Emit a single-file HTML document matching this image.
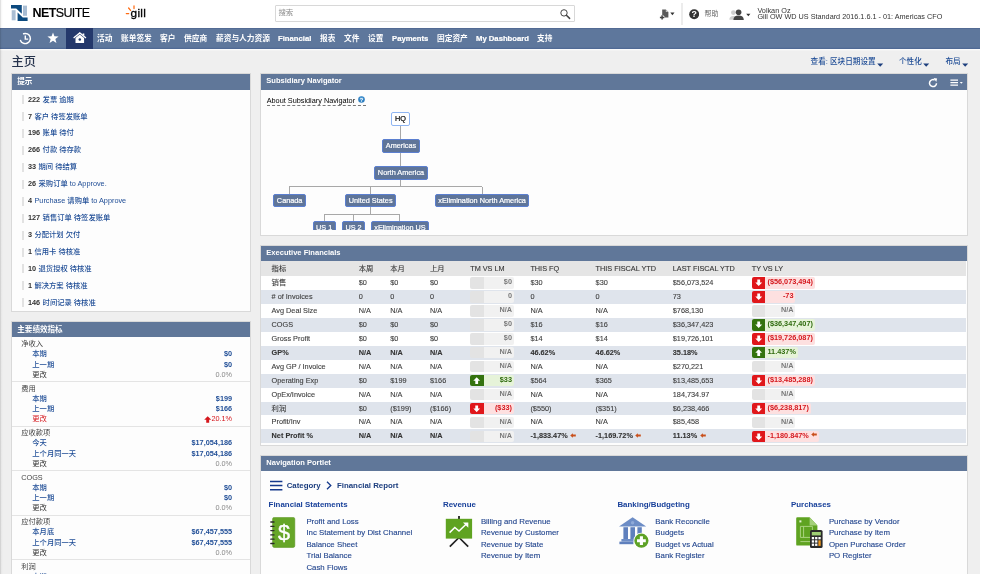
<!DOCTYPE html>
<html lang="zh-CN">
<head>
<meta charset="utf-8">
<title>主页 - NetSuite</title>
<style>
html,body{margin:0;padding:0}
body{width:981px;height:574px;overflow:hidden;background:#fff;position:relative;
 font-family:"Liberation Sans","Noto Sans CJK SC",sans-serif;font-size:7.6px;color:#333;line-height:1}
*{box-sizing:border-box}
a{text-decoration:none;color:#1f4d96}
#page{position:absolute;left:0;top:0;width:981px;height:574px;overflow:hidden;will-change:transform;background:linear-gradient(#efefef,#efefef) 0 0/980px 574px no-repeat}
#edge{position:absolute;left:0;top:0;width:3px;height:574px;background:linear-gradient(to right,rgba(0,0,0,.16),rgba(0,0,0,.03) 45%,rgba(0,0,0,0));z-index:5}
.abs{position:absolute;white-space:nowrap}
#hdr{position:absolute;left:0;top:0;width:981px;height:28.4px;background:#fff}
#nav{position:absolute;left:0;top:28.4px;width:980px;height:20.5px;background:#5e779c;box-shadow:inset 0 1px 0 #536b94,inset 0 -1.2px 0 #506a95,0 1.3px 0 #fbfbfb}
#nav .it{position:absolute;top:0.3px;height:20.5px;line-height:20.5px;color:#fff;font-weight:bold;font-size:7.7px;white-space:nowrap}
#nav .lt{-webkit-text-stroke:0.2px #fff}
#home{position:absolute;left:66px;top:0;width:27px;height:20.5px;background:#24386b}
.panel{position:absolute;background:#fdfdfd;overflow:hidden;box-shadow:0 0 0 1px #d9d9d9}
.ph{position:absolute;left:0;top:0;right:0;height:15.4px;background:#607799;color:#fff;font-weight:bold;font-size:7.55px;line-height:15.4px;padding-left:5.3px;white-space:nowrap}
.ph.phl{line-height:14px}
.rm{position:absolute;left:10px;height:10px;line-height:10px;font-size:7.3px;white-space:nowrap;padding-left:6px;color:#333}
.rm i{position:absolute;left:0;top:0.6px;width:1.6px;height:9px;background:#e2e2e2}
.rm b{color:#333;margin-right:0.4px}
.rm a{font-weight:500}
.kh{position:absolute;left:9.2px;height:10px;line-height:10px;font-size:7.3px;color:#444;white-space:nowrap}
.kr{position:absolute;left:20.3px;width:199.8px;height:10px;line-height:10px;font-size:7.3px;white-space:nowrap}
.kr span{position:absolute;right:0;top:0}
.kb{font-weight:bold;color:#1f4d96}
.kb a{font-weight:500}
.kg em{font-style:normal;color:#333}
.kg span{color:#888}
.kred{color:#d5171d}
.kred em{font-style:normal}
.ks{position:absolute;left:0;right:0;height:1px;background:#e4e4e4}
.tc{font-size:7.6px;line-height:10px;color:#1f4d96;font-weight:500}
.nd{position:absolute;background:#5f7599;border:1px solid #5b7fd0;border-radius:2px;color:#fff;font-size:7.3px;text-align:center;white-space:nowrap;line-height:11.6px;-webkit-text-stroke:0.2px #fff}
.nd.hq{background:#fff;border-color:#8fb5f2;color:#000;-webkit-text-stroke:0.2px #000}
.ln{position:absolute;background:#a8a8a8}
.th,.tr{position:absolute;left:0;right:1.2px;white-space:nowrap;font-size:7.3px;color:#3c3c3c;-webkit-text-stroke:0.1px #3c3c3c}
.th{background:#e5e5e5;color:#333}
.th span{position:absolute;top:0;line-height:15.4px}
.tr{height:13.95px;background:#fff}
.tr.alt{background:#dfe4ec}
.tr.bd{font-weight:bold;color:#333}
.tr>span{position:absolute;top:0;line-height:14.6px}
.tr>span.ic{top:1.25px;line-height:0}
.la{vertical-align:0.3px;margin-left:0.5px}
.ind{-webkit-text-stroke:0;display:inline-flex;height:11.5px;min-width:43.8px;border-radius:2px;overflow:hidden;font-weight:bold;font-size:7.3px;vertical-align:top}
.ind i{display:block;width:13.4px;height:11.5px;flex:none;text-align:center;line-height:0;padding-top:2.1px}
.ind u{display:block;flex:1;text-decoration:none;text-align:right;padding:0 2px 0 2.4px;line-height:9.8px;height:11.5px}
.ind.n i{background:#e3e3e3}.ind.n u{background:#f1f1f1;color:#7a7a7a}
.ind.r i{background:#e0171b}.ind.r u{background:#fde0e0;color:#d5171d}
.ind.g i{background:#34730f}.ind.g u{background:#e6f3d9;color:#2f6b0e}
.nb{font-size:7.85px;font-weight:bold;color:#1b3d7e;line-height:10px}
.nh{font-size:7.9px;font-weight:bold;color:#18409a;line-height:10px}
.nl{font-size:7.85px;color:#24478f;line-height:10px;-webkit-text-stroke:0.12px #24478f}
</style>
</head>
<body>
<div id="page">
<div id="edge"></div>
<div id="hdr">
 <svg class="abs" style="left:11.4px;top:4.8px" width="16.6" height="16" viewBox="0 0 16.6 16">
  <rect x="0.7" y="5.2" width="3.9" height="10.1" fill="#a9bdd3"/>
  <rect x="12" y="0.6" width="4" height="10.2" fill="#a9bdd3"/>
  <polygon points="0,0 10.8,0 10.8,8.8 5.2,3.6 0,3.6" fill="#0c4a7f"/>
  <polygon points="6.6,16 16.6,16 16.6,12.4 11.8,12.4 6.6,7.4" fill="#0c4a7f"/>
 </svg>
 <div class="abs" id="nstxt" style="left:32.6px;top:5.8px;font-size:12.5px;line-height:15px;color:#000;letter-spacing:-0.62px"><b>NET</b><span style="-webkit-text-stroke:0.15px #000">SUITE</span></div>
 <svg class="abs" style="left:125px;top:4px" width="12" height="12" viewBox="0 0 12 12">
  <g stroke="#ff6a10" stroke-width="1.25" stroke-linecap="round" fill="none">
   <line x1="9" y1="1.9" x2="9" y2="4.6"/><line x1="3.6" y1="4" x2="5.6" y2="6.3"/><line x1="1.3" y1="9.5" x2="3.7" y2="9.5"/>
  </g>
 </svg>
 <div class="abs" id="gill" style="left:130.6px;top:5.6px;font-size:11.8px;line-height:14px;color:#000;letter-spacing:0.25px;-webkit-text-stroke:0.3px #000">gill</div>
 <div class="abs" id="srch" style="left:275px;top:5px;width:300px;height:16.5px;border:1px solid #d8d8d8;background:#fff;border-radius:1px">
  <span class="abs" style="left:2.4px;top:3.4px;font-size:7.4px;line-height:8px;color:#8a8a8a">搜索</span>
  <svg class="abs" style="right:2px;top:1.9px" width="13" height="12" viewBox="0 0 13 12"><circle cx="5" cy="4.9" r="3.2" fill="none" stroke="#444" stroke-width="1"/><line x1="7.4" y1="7.3" x2="10.6" y2="10.4" stroke="#444" stroke-width="1.5" stroke-linecap="round"/></svg>
 </div>
 <svg class="abs" style="left:659px;top:8.5px" width="17" height="12" viewBox="0 0 17 12">
  <path d="M3.2 0.5h3.6l2.6 2.6v5.4H5.4L3.2 6.4z" fill="#5a5a5a"/><path d="M6.8 0.5l2.6 2.6H6.8z" fill="#c4c4c4"/>
  <path d="M3.1 6.1v4.6M0.8 8.4h4.6" stroke="#fff" stroke-width="2.6" fill="none"/>
  <path d="M3.1 6.2v4.4M0.9 8.4h4.4" stroke="#444" stroke-width="1.5" fill="none"/>
  <path d="M11.3 3.4h4.2l-2.1 2.9z" fill="#333"/>
 </svg>
 <div class="abs" style="left:681.3px;top:3px;width:1.4px;height:22px;background:#ececec"></div>
 <svg class="abs" style="left:688.5px;top:9.2px" width="10.4" height="10.4" viewBox="0 0 10.4 10.4"><circle cx="5.2" cy="5.2" r="5" fill="#333"/><text x="5.2" y="8.4" text-anchor="middle" font-family="Liberation Sans, sans-serif" font-weight="bold" font-size="8.8" fill="#fff">?</text></svg>
 <div class="abs" style="left:704.6px;top:10px;font-size:7px;line-height:8px;color:#666">帮助</div>
 <svg class="abs" style="left:728.5px;top:8.6px" width="23" height="11.5" viewBox="0 0 23 11.5">
  <circle cx="4.4" cy="3.6" r="2.4" fill="#cfcfcf"/><path d="M0.3 10.8c0-2.6 1.6-3.8 4.1-3.8s4.1 1.2 4.1 3.8z" fill="#cfcfcf"/>
  <circle cx="9.6" cy="3.3" r="2.8" fill="#444"/><path d="M4.4 11c0-3 2-4.4 5.2-4.4s5.2 1.4 5.2 4.4z" fill="#444"/>
  <path d="M17.2 4.8h4.2l-2.1 2.4z" fill="#333"/>
 </svg>
 <div class="abs" id="u1" style="left:757.4px;top:6.8px;font-size:7.27px;line-height:8px;color:#333">Volkan Oz</div>
 <div class="abs" id="u2" style="left:757.4px;top:13.4px;font-size:7.27px;line-height:8px;color:#333">Gill OW WD US Standard 2016.1.6.1 - 01: Americas CFO</div>
</div>
<div id="nav">
 <div id="home"></div>
 <svg class="abs" style="left:19px;top:3.5px" width="13" height="13" viewBox="0 0 13 13">
  <path d="M4.6 1.7A5.1 5.1 0 1 1 1.5 8.4" fill="none" stroke="#fff" stroke-width="1.45" stroke-linecap="round"/>
  <path d="M6.3 3.6v3.5h2.9" fill="none" stroke="#fff" stroke-width="1.4"/>
 </svg>
 <svg class="abs" style="left:46.6px;top:3.6px" width="12" height="12" viewBox="0 0 12 12"><polygon points="6,0.4 7.45,4.3 11.6,4.45 8.35,7 9.45,11 6,8.7 2.55,11 3.65,7 0.4,4.45 4.55,4.3" fill="#fff"/></svg>
 <svg class="abs" style="left:73.2px;top:3.6px" width="13.6" height="11.6" viewBox="0 0 13.6 11.6">
  <path d="M0.6 5.9L6.8 0.9L13 5.9" fill="none" stroke="#fff" stroke-width="1.3" stroke-linejoin="miter"/>
  <path d="M9.6 1.4h1.7v2.4l-1.7-1.3z" fill="#fff"/>
  <path d="M2.5 5.9L6.8 2.6L11.1 5.9V11H2.5z" fill="#fff"/>
  <circle cx="6.8" cy="7.6" r="1.25" fill="#24386b"/>
 </svg>
 <div class="it" style="left:97px">活动</div>
 <div class="it" style="left:121px">账单签发</div>
 <div class="it" style="left:160px">客户</div>
 <div class="it" style="left:184px">供应商</div>
 <div class="it" style="left:216px">薪资与人力资源</div>
 <div class="it lt" style="left:278px">Financial</div>
 <div class="it" style="left:320px">报表</div>
 <div class="it" style="left:344px">文件</div>
 <div class="it" style="left:368px">设置</div>
 <div class="it lt" style="left:392px">Payments</div>
 <div class="it" style="left:437px">固定资产</div>
 <div class="it lt" style="left:476px">My Dashboard</div>
 <div class="it" style="left:537px">支持</div>
</div>
<div class="abs" id="ttl" style="left:11.5px;top:53.8px;font-size:12.2px;line-height:16px;color:#26334d;font-weight:500">主页</div>

<div class="abs tc" style="left:810.6px;top:56.6px">查看: 区块日期设置</div><svg class="abs" style="left:877.2px;top:63px" width="6.4" height="4" viewBox="0 0 6.4 4"><path d="M0.2 0.4h6l-3 3.3z" fill="#1d3f7d"/></svg>
<div class="abs tc" style="left:899px;top:56.6px">个性化</div><svg class="abs" style="left:923.2px;top:63px" width="6.4" height="4" viewBox="0 0 6.4 4"><path d="M0.2 0.4h6l-3 3.3z" fill="#1d3f7d"/></svg>
<div class="abs tc" style="left:945.4px;top:56.6px">布局</div><svg class="abs" style="left:962.2px;top:63px" width="6.4" height="4" viewBox="0 0 6.4 4"><path d="M0.2 0.4h6l-3 3.3z" fill="#1d3f7d"/></svg>

<div class="panel" id="p1" style="left:12px;top:74.3px;width:238px;height:236.6px">
 <div class="ph">提示</div>
 <div class="rm" style="top:20.30px"><i></i><b>222</b> <a>发票 逾期</a></div>
 <div class="rm" style="top:37.23px"><i></i><b>7</b> <a>客户 待签发账单</a></div>
 <div class="rm" style="top:54.16px"><i></i><b>196</b> <a>账单 待付</a></div>
 <div class="rm" style="top:71.09px"><i></i><b>266</b> <a>付款 待存款</a></div>
 <div class="rm" style="top:88.02px"><i></i><b>33</b> <a>期间 待结算</a></div>
 <div class="rm" style="top:104.95px"><i></i><b>26</b> <a>采购订单 to Approve.</a></div>
 <div class="rm" style="top:121.88px"><i></i><b>4</b> <a>Purchase 请购单 to Approve</a></div>
 <div class="rm" style="top:138.81px"><i></i><b>127</b> <a>销售订单 待签发账单</a></div>
 <div class="rm" style="top:155.74px"><i></i><b>3</b> <a>分配计划 欠付</a></div>
 <div class="rm" style="top:172.67px"><i></i><b>1</b> <a>信用卡 待核准</a></div>
 <div class="rm" style="top:189.60px"><i></i><b>10</b> <a>退货授权 待核准</a></div>
 <div class="rm" style="top:206.53px"><i></i><b>1</b> <a>解决方案 待核准</a></div>
 <div class="rm" style="top:223.46px"><i></i><b>146</b> <a>时间记录 待核准</a></div>
</div>
<div class="panel" id="p2" style="left:12px;top:321.8px;width:238px;height:260px">
 <div class="ph">主要绩效指标</div>
 <div class="kh" style="top:17.50px">净收入</div>
 <div class="kr kb" style="top:27.70px"><a>本期</a><span>$0</span></div>
 <div class="kr kb" style="top:37.90px"><a>上一期</a><span>$0</span></div>
 <div class="kr kg" style="top:48.10px"><em>更改</em><span>0.0%</span></div>
 <div class="ks" style="top:59.60px"></div>
 <div class="kh" style="top:62.00px">费用</div>
 <div class="kr kb" style="top:72.20px"><a>本期</a><span>$199</span></div>
 <div class="kr kb" style="top:82.40px"><a>上一期</a><span>$166</span></div>
 <div class="kr kred" style="top:92.60px"><em>更改</em><span><svg width="7.4" height="7" viewBox="0 0 10 10" preserveAspectRatio="none" style="vertical-align:-1.7px;margin-right:0px"><path d="M5 0.3L9.7 5.2H7V9.7H3V5.2H0.3z" fill="#d5171d"/></svg>20.1%</span></div>
 <div class="ks" style="top:104.10px"></div>
 <div class="kh" style="top:106.50px">应收款项</div>
 <div class="kr kb" style="top:116.70px"><a>今天</a><span>$17,054,186</span></div>
 <div class="kr kb" style="top:126.90px"><a>上个月同一天</a><span>$17,054,186</span></div>
 <div class="kr kg" style="top:137.10px"><em>更改</em><span>0.0%</span></div>
 <div class="ks" style="top:148.60px"></div>
 <div class="kh" style="top:151.00px">COGS</div>
 <div class="kr kb" style="top:161.20px"><a>本期</a><span>$0</span></div>
 <div class="kr kb" style="top:171.40px"><a>上一期</a><span>$0</span></div>
 <div class="kr kg" style="top:181.60px"><em>更改</em><span>0.0%</span></div>
 <div class="ks" style="top:193.10px"></div>
 <div class="kh" style="top:195.50px">应付款项</div>
 <div class="kr kb" style="top:205.70px"><a>本月底</a><span>$67,457,555</span></div>
 <div class="kr kb" style="top:215.90px"><a>上个月同一天</a><span>$67,457,555</span></div>
 <div class="kr kg" style="top:226.10px"><em>更改</em><span>0.0%</span></div>
 <div class="ks" style="top:237.60px"></div>
 <div class="kh" style="top:240.00px">利润</div>
 <div class="kr kb" style="top:250.20px"><a>本期</a><span>($199)</span></div>
 <div class="kr kb" style="top:260.40px"><a>上一期</a><span>($166)</span></div>
 <div class="kr kg" style="top:270.60px"><em>更改</em><span>0.0%</span></div>
 <div class="ks" style="top:282.10px"></div>
</div>
<div class="panel" id="p3" style="left:261px;top:74.4px;width:706.2px;height:160.5px">
 <div class="ph phl">Subsidiary Navigator</div>
 <div class="abs" id="about" style="left:5.7px;top:22.2px;font-size:7.3px;line-height:8.6px;color:#000;border-bottom:1px dashed #777;padding-right:10.4px">About Subsidiary Navigator</div>
 <svg class="abs" style="left:97px;top:21.6px" width="7" height="7" viewBox="0 0 7 7"><circle cx="3.5" cy="3.5" r="3.3" fill="#2f7fc0"/><circle cx="3.5" cy="2.6" r="2.2" fill="#5aa5dd" opacity=".6"/><text x="3.5" y="5.6" text-anchor="middle" font-family="Liberation Sans, sans-serif" font-weight="bold" font-size="5.6" fill="#fff">?</text></svg>
 <div class="ln" style="left:139.1px;top:51.2px;width:1px;height:13.7px"></div>
 <div class="ln" style="left:139.1px;top:78.4px;width:1px;height:13.4px"></div>
 <div class="ln" style="left:139.1px;top:105.6px;width:1px;height:7.0px"></div>
 <div class="ln" style="left:27.8px;top:112.1px;width:193.7px;height:1px"></div>
 <div class="ln" style="left:27.8px;top:112.6px;width:1px;height:7.0px"></div>
 <div class="ln" style="left:108.9px;top:112.6px;width:1px;height:7.0px"></div>
 <div class="ln" style="left:220.5px;top:112.6px;width:1px;height:7.0px"></div>
 <div class="ln" style="left:108.9px;top:132.6px;width:1px;height:7.2px"></div>
 <div class="ln" style="left:62.5px;top:139.3px;width:76.6px;height:1px"></div>
 <div class="ln" style="left:62.5px;top:139.8px;width:1px;height:6.8px"></div>
 <div class="ln" style="left:91.5px;top:139.8px;width:1px;height:6.8px"></div>
 <div class="ln" style="left:138.1px;top:139.8px;width:1px;height:6.8px"></div>
 <div class="nd hq" style="left:129.9px;top:37.4px;width:19.1px;height:13.8px">HQ</div>
 <div class="nd" style="left:121.0px;top:64.9px;width:38.0px;height:13.5px">Americas</div>
 <div class="nd" style="left:113.2px;top:91.8px;width:53.6px;height:13.9px">North America</div>
 <div class="nd" style="left:12.3px;top:119.3px;width:32.7px;height:13.3px">Canada</div>
 <div class="nd" style="left:84.3px;top:119.3px;width:50.7px;height:13.3px">United States</div>
 <div class="nd" style="left:173.8px;top:119.3px;width:94.7px;height:13.3px">xElimination North America</div>
 <div class="abs" style="left:0;top:146px;width:300px;height:9.2px;overflow:hidden">
  <div class="nd" style="left:51.6px;top:0.5px;width:23.1px;height:13.4px">US 1</div>
  <div class="nd" style="left:81.0px;top:0.5px;width:23px;height:13.4px">US 2</div>
  <div class="nd" style="left:110.0px;top:0.5px;width:58px;height:13.4px">xElimination US</div>
 </div>
 <svg class="abs" style="left:667px;top:3.2px" width="10" height="10" viewBox="0 0 10 10"><path d="M8.5 5.2A3.5 3.5 0 1 1 6.6 2.0" fill="none" stroke="#fff" stroke-width="1.5"/><path d="M5.6 0.1L9.1 0.5L8.3 3.9z" fill="#fff"/></svg>
 <svg class="abs" style="left:688.6px;top:4.3px" width="14" height="8" viewBox="0 0 14 8"><path d="M0.4 1.2h7.6M0.4 3.7h7.6M0.4 6.2h7.6" stroke="#fff" stroke-width="1.3"/><path d="M9.8 2.9h3l-1.5 1.9z" fill="#fff"/></svg>
</div>
<div class="panel" id="p4" style="left:261px;top:246.1px;width:706.2px;height:198.8px">
 <div class="ph phl">Executive Financials</div>
 <div class="th" style="top:15.2px;height:14.80px">
  <span style="left:10.6px">指标</span>
  <span style="left:97.7px">本周</span>
  <span style="left:129.3px">本月</span>
  <span style="left:169.0px">上月</span>
  <span style="left:209.2px">TM VS LM</span>
  <span style="left:269.4px">THIS FQ</span>
  <span style="left:334.6px">THIS FISCAL YTD</span>
  <span style="left:411.8px">LAST FISCAL YTD</span>
  <span style="left:490.7px">TY VS LY</span>
 </div>
 <div class="tr" style="top:29.90px">
  <span style="left:10.6px">销售</span>
  <span style="left:97.7px">$0</span>
  <span style="left:129.3px">$0</span>
  <span style="left:169.0px">$0</span>
  <span class="ic" style="left:209.2px"><span class="ind n"><i></i><u>$0</u></span></span>
  <span style="left:269.4px">$30</span>
  <span style="left:334.6px">$30</span>
  <span style="left:411.8px">$56,073,524</span>
  <span class="ic" style="left:490.7px"><span class="ind r"><i><svg width="7.4" height="7.4" viewBox="0 0 10 10"><path d="M5 9.6L0.4 4.9H3.1V0.6H6.9V4.9H9.6z" fill="#fff"/></svg></i><u>($56,073,494)</u></span></span>
 </div>
 <div class="tr alt" style="top:43.85px">
  <span style="left:10.6px"># of Invoices</span>
  <span style="left:97.7px">0</span>
  <span style="left:129.3px">0</span>
  <span style="left:169.0px">0</span>
  <span class="ic" style="left:209.2px"><span class="ind n"><i></i><u>0</u></span></span>
  <span style="left:269.4px">0</span>
  <span style="left:334.6px">0</span>
  <span style="left:411.8px">73</span>
  <span class="ic" style="left:490.7px"><span class="ind r"><i><svg width="7.4" height="7.4" viewBox="0 0 10 10"><path d="M5 9.6L0.4 4.9H3.1V0.6H6.9V4.9H9.6z" fill="#fff"/></svg></i><u>-73</u></span></span>
 </div>
 <div class="tr" style="top:57.80px">
  <span style="left:10.6px">Avg Deal Size</span>
  <span style="left:97.7px">N/A</span>
  <span style="left:129.3px">N/A</span>
  <span style="left:169.0px">N/A</span>
  <span class="ic" style="left:209.2px"><span class="ind n"><i></i><u>N/A</u></span></span>
  <span style="left:269.4px">N/A</span>
  <span style="left:334.6px">N/A</span>
  <span style="left:411.8px">$768,130</span>
  <span class="ic" style="left:490.7px"><span class="ind n"><i></i><u>N/A</u></span></span>
 </div>
 <div class="tr alt" style="top:71.75px">
  <span style="left:10.6px">COGS</span>
  <span style="left:97.7px">$0</span>
  <span style="left:129.3px">$0</span>
  <span style="left:169.0px">$0</span>
  <span class="ic" style="left:209.2px"><span class="ind n"><i></i><u>$0</u></span></span>
  <span style="left:269.4px">$16</span>
  <span style="left:334.6px">$16</span>
  <span style="left:411.8px">$36,347,423</span>
  <span class="ic" style="left:490.7px"><span class="ind g"><i><svg width="7.4" height="7.4" viewBox="0 0 10 10"><path d="M5 9.6L0.4 4.9H3.1V0.6H6.9V4.9H9.6z" fill="#fff"/></svg></i><u>($36,347,407)</u></span></span>
 </div>
 <div class="tr" style="top:85.70px">
  <span style="left:10.6px">Gross Profit</span>
  <span style="left:97.7px">$0</span>
  <span style="left:129.3px">$0</span>
  <span style="left:169.0px">$0</span>
  <span class="ic" style="left:209.2px"><span class="ind n"><i></i><u>$0</u></span></span>
  <span style="left:269.4px">$14</span>
  <span style="left:334.6px">$14</span>
  <span style="left:411.8px">$19,726,101</span>
  <span class="ic" style="left:490.7px"><span class="ind r"><i><svg width="7.4" height="7.4" viewBox="0 0 10 10"><path d="M5 9.6L0.4 4.9H3.1V0.6H6.9V4.9H9.6z" fill="#fff"/></svg></i><u>($19,726,087)</u></span></span>
 </div>
 <div class="tr alt bd" style="top:99.65px">
  <span style="left:10.6px">GP%</span>
  <span style="left:97.7px">N/A</span>
  <span style="left:129.3px">N/A</span>
  <span style="left:169.0px">N/A</span>
  <span class="ic" style="left:209.2px"><span class="ind n"><i></i><u>N/A</u></span></span>
  <span style="left:269.4px">46.62%</span>
  <span style="left:334.6px">46.62%</span>
  <span style="left:411.8px">35.18%</span>
  <span class="ic" style="left:490.7px"><span class="ind g"><i><svg width="7.4" height="7.4" viewBox="0 0 10 10"><path d="M5 0.4L9.6 5.1H6.9V9.4H3.1V5.1H0.4z" fill="#fff"/></svg></i><u>11.437%</u></span></span>
 </div>
 <div class="tr" style="top:113.60px">
  <span style="left:10.6px">Avg GP / Invoice</span>
  <span style="left:97.7px">N/A</span>
  <span style="left:129.3px">N/A</span>
  <span style="left:169.0px">N/A</span>
  <span class="ic" style="left:209.2px"><span class="ind n"><i></i><u>N/A</u></span></span>
  <span style="left:269.4px">N/A</span>
  <span style="left:334.6px">N/A</span>
  <span style="left:411.8px">$270,221</span>
  <span class="ic" style="left:490.7px"><span class="ind n"><i></i><u>N/A</u></span></span>
 </div>
 <div class="tr alt" style="top:127.55px">
  <span style="left:10.6px">Operating Exp</span>
  <span style="left:97.7px">$0</span>
  <span style="left:129.3px">$199</span>
  <span style="left:169.0px">$166</span>
  <span class="ic" style="left:209.2px"><span class="ind g"><i><svg width="7.4" height="7.4" viewBox="0 0 10 10"><path d="M5 0.4L9.6 5.1H6.9V9.4H3.1V5.1H0.4z" fill="#fff"/></svg></i><u>$33</u></span></span>
  <span style="left:269.4px">$564</span>
  <span style="left:334.6px">$365</span>
  <span style="left:411.8px">$13,485,653</span>
  <span class="ic" style="left:490.7px"><span class="ind r"><i><svg width="7.4" height="7.4" viewBox="0 0 10 10"><path d="M5 9.6L0.4 4.9H3.1V0.6H6.9V4.9H9.6z" fill="#fff"/></svg></i><u>($13,485,288)</u></span></span>
 </div>
 <div class="tr" style="top:141.50px">
  <span style="left:10.6px">OpEx/Invoice</span>
  <span style="left:97.7px">N/A</span>
  <span style="left:129.3px">N/A</span>
  <span style="left:169.0px">N/A</span>
  <span class="ic" style="left:209.2px"><span class="ind n"><i></i><u>N/A</u></span></span>
  <span style="left:269.4px">N/A</span>
  <span style="left:334.6px">N/A</span>
  <span style="left:411.8px">184,734.97</span>
  <span class="ic" style="left:490.7px"><span class="ind n"><i></i><u>N/A</u></span></span>
 </div>
 <div class="tr alt" style="top:155.45px">
  <span style="left:10.6px">利润</span>
  <span style="left:97.7px">$0</span>
  <span style="left:129.3px">($199)</span>
  <span style="left:169.0px">($166)</span>
  <span class="ic" style="left:209.2px"><span class="ind r"><i><svg width="7.4" height="7.4" viewBox="0 0 10 10"><path d="M5 9.6L0.4 4.9H3.1V0.6H6.9V4.9H9.6z" fill="#fff"/></svg></i><u>($33)</u></span></span>
  <span style="left:269.4px">($550)</span>
  <span style="left:334.6px">($351)</span>
  <span style="left:411.8px">$6,238,466</span>
  <span class="ic" style="left:490.7px"><span class="ind r"><i><svg width="7.4" height="7.4" viewBox="0 0 10 10"><path d="M5 9.6L0.4 4.9H3.1V0.6H6.9V4.9H9.6z" fill="#fff"/></svg></i><u>($6,238,817)</u></span></span>
 </div>
 <div class="tr" style="top:169.40px">
  <span style="left:10.6px">Profit/Inv</span>
  <span style="left:97.7px">N/A</span>
  <span style="left:129.3px">N/A</span>
  <span style="left:169.0px">N/A</span>
  <span class="ic" style="left:209.2px"><span class="ind n"><i></i><u>N/A</u></span></span>
  <span style="left:269.4px">N/A</span>
  <span style="left:334.6px">N/A</span>
  <span style="left:411.8px">$85,458</span>
  <span class="ic" style="left:490.7px"><span class="ind n"><i></i><u>N/A</u></span></span>
 </div>
 <div class="tr alt bd" style="top:183.35px">
  <span style="left:10.6px">Net Profit %</span>
  <span style="left:97.7px">N/A</span>
  <span style="left:129.3px">N/A</span>
  <span style="left:169.0px">N/A</span>
  <span class="ic" style="left:209.2px"><span class="ind n"><i></i><u>N/A</u></span></span>
  <span style="left:269.4px">-1,833.47% <svg class="la" width="6" height="5" viewBox="0 0 6 5"><path d="M0.2 2.5L2.9 0.2V1.6H5.8V3.4H2.9V4.8z" fill="#c9501c"/></svg></span>
  <span style="left:334.6px">-1,169.72% <svg class="la" width="6" height="5" viewBox="0 0 6 5"><path d="M0.2 2.5L2.9 0.2V1.6H5.8V3.4H2.9V4.8z" fill="#c9501c"/></svg></span>
  <span style="left:411.8px">11.13% <svg class="la" width="6" height="5" viewBox="0 0 6 5"><path d="M0.2 2.5L2.9 0.2V1.6H5.8V3.4H2.9V4.8z" fill="#c9501c"/></svg></span>
  <span class="ic" style="left:490.7px"><span class="ind r"><i><svg width="7.4" height="7.4" viewBox="0 0 10 10"><path d="M5 9.6L0.4 4.9H3.1V0.6H6.9V4.9H9.6z" fill="#fff"/></svg></i><u>-1,180.847% <svg class="la" width="6" height="5" viewBox="0 0 6 5"><path d="M0.2 2.5L2.9 0.2V1.6H5.8V3.4H2.9V4.8z" fill="#c9501c"/></svg></u></span></span>
 </div>
</div>
<div class="panel" id="p5" style="left:261px;top:456px;width:706.2px;height:130px">
 <div class="ph phl">Navigation Portlet</div>
 <svg class="abs" style="left:9.3px;top:23.6px" width="12.4" height="11" viewBox="0 0 12.4 11"><path d="M0 1.4h12.4M0 5.6h12.4M0 9.8h12.4" stroke="#15398c" stroke-width="1.5"/></svg>
 <div class="abs nb" style="left:25.7px;top:25.2px">Category</div>
 <svg class="abs" style="left:65.3px;top:25px" width="6" height="9" viewBox="0 0 6 9"><path d="M1 0.8L4.8 4.5L1 8.2" fill="none" stroke="#15398c" stroke-width="1.3"/></svg>
 <div class="abs nb" style="left:76px;top:25.2px">Financial Report</div>
 <div class="abs nh" style="left:7.6px;top:43.5px">Financial Statements</div>
 <a class="abs nl" style="left:45.4px;top:60.70px">Profit and Loss</a>
 <a class="abs nl" style="left:45.4px;top:72.17px">Inc Statement by Dist Channel</a>
 <a class="abs nl" style="left:45.4px;top:83.64px">Balance Sheet</a>
 <a class="abs nl" style="left:45.4px;top:95.11px">Trial Balance</a>
 <a class="abs nl" style="left:45.4px;top:106.58px">Cash Flows</a>
 <div class="abs nh" style="left:182.0px;top:43.5px">Revenue</div>
 <a class="abs nl" style="left:219.9px;top:60.70px">Billing and Revenue</a>
 <a class="abs nl" style="left:219.9px;top:72.17px">Revenue by Customer</a>
 <a class="abs nl" style="left:219.9px;top:83.64px">Revenue by State</a>
 <a class="abs nl" style="left:219.9px;top:95.11px">Revenue by Item</a>
 <div class="abs nh" style="left:356.4px;top:43.5px">Banking/Budgeting</div>
 <a class="abs nl" style="left:394.3px;top:60.70px">Bank Reconcile</a>
 <a class="abs nl" style="left:394.3px;top:72.17px">Budgets</a>
 <a class="abs nl" style="left:394.3px;top:83.64px">Budget vs Actual</a>
 <a class="abs nl" style="left:394.3px;top:95.11px">Bank Register</a>
 <div class="abs nh" style="left:530.0px;top:43.5px">Purchases</div>
 <a class="abs nl" style="left:567.9px;top:60.70px">Purchase by Vendor</a>
 <a class="abs nl" style="left:567.9px;top:72.17px">Purchase by Item</a>
 <a class="abs nl" style="left:567.9px;top:83.64px">Open Purchase Order</a>
 <a class="abs nl" style="left:567.9px;top:95.11px">PO Register</a>
 <svg class="abs" style="left:9.4px;top:60.6px" width="25.4" height="31" viewBox="0 0 25.4 31">
  <rect x="2.6" y="0.4" width="22.2" height="30" rx="1.6" fill="#66a628"/>
  <rect x="2.6" y="0.4" width="22.2" height="30" rx="1.6" fill="none" stroke="#5a9620" stroke-width="0.6"/>
  <g stroke="#2b2b2b" stroke-width="1.3" stroke-linecap="round"><line x1="0.8" y1="5" x2="4" y2="5"/><line x1="0.8" y1="9.3" x2="4" y2="9.3"/><line x1="0.8" y1="13.6" x2="4" y2="13.6"/><line x1="0.8" y1="17.9" x2="4" y2="17.9"/><line x1="0.8" y1="22.2" x2="4" y2="22.2"/><line x1="0.8" y1="26.5" x2="4" y2="26.5"/></g>
  <text x="14" y="23.2" text-anchor="middle" font-family="Liberation Sans, sans-serif" font-size="21.6" stroke="#fff" stroke-width="0.4" fill="#fff">$</text>
 </svg>
 <svg class="abs" style="left:184.0px;top:60.4px" width="28" height="31.5" viewBox="0 0 28 31.5">
  <rect x="13.1" y="0" width="1.8" height="3.4" fill="#222"/>
  <path d="M14 21.5L4.8 30.6M14 21.5L23.2 30.6" stroke="#222" stroke-width="1.7" fill="none"/>
  <rect x="0.8" y="2.8" width="26.3" height="19.8" fill="#5fa321"/>
  <path d="M4.6 16.6L9.8 11.4L14 15L21.4 8" fill="none" stroke="#fff" stroke-width="1.5"/>
  <path d="M18 6.4h5.3v5.3z" fill="#fff"/>
 </svg>
 <svg class="abs" style="left:357.6px;top:60.6px" width="31" height="32" viewBox="0 0 31 32">
  <path d="M13.6 0.3L27.2 9.4H0z" fill="#6d8dc6"/>
  <circle cx="13.6" cy="5.8" r="1.7" fill="#8ea9d8"/>
  <rect x="4.4" y="10.2" width="4.6" height="12" fill="#5f80bd"/><rect x="11.4" y="10.2" width="4.6" height="12" fill="#5f80bd"/><rect x="18.4" y="10.2" width="4.4" height="8" fill="#5f80bd"/>
  <rect x="2.4" y="22" width="14" height="2.6" fill="#6d8dc6"/><rect x="0.4" y="24.6" width="14" height="2.6" fill="#5f80bd"/>
  <circle cx="22.4" cy="23.7" r="7.9" fill="#fff"/><circle cx="22.4" cy="23.7" r="7.1" fill="#5ea226"/>
  <path d="M22.4 19.3v8.8M18 23.7h8.8" stroke="#fff" stroke-width="3.1"/>
 </svg>
 <svg class="abs" style="left:534.6px;top:60.8px" width="27" height="31.5" viewBox="0 0 27 31.5">
  <path d="M1.4 0.3H13.6L21.4 8.4V27.4a1.2 1.2 0 0 1-1.2 1.2H1.4A1.2 1.2 0 0 1 0.2 27.4V1.5A1.2 1.2 0 0 1 1.4 0.3z" fill="#5fa321"/>
  <path d="M13.6 0.3L21.4 8.4H13.6z" fill="#a4d07a"/>
  <rect x="3.4" y="3.4" width="2" height="2" fill="#e6f3d8"/>
  <path d="M4.4 9.4h12v11h-12zM7.6 9.4v11M4.4 24.6h10" fill="none" stroke="#a9d37f" stroke-width="1"/>
  <rect x="14" y="13" width="12.6" height="18" rx="1.6" fill="#2b2b2b"/>
  <rect x="15.8" y="15" width="9" height="3.4" fill="#9fcf74"/>
  <g fill="#fff"><rect x="15.8" y="20" width="2.3" height="2.3"/><rect x="19.1" y="20" width="2.3" height="2.3"/><rect x="22.4" y="20" width="2.3" height="2.3"/><rect x="15.8" y="23.3" width="2.3" height="2.3"/><rect x="19.1" y="23.3" width="2.3" height="2.3"/><rect x="15.8" y="26.6" width="2.3" height="2.3"/><rect x="19.1" y="26.6" width="2.3" height="2.3"/></g>
  <rect x="22.4" y="23.3" width="2.3" height="5.6" fill="#f39a1e"/>
 </svg>
</div>
</div>
</body>
</html>
